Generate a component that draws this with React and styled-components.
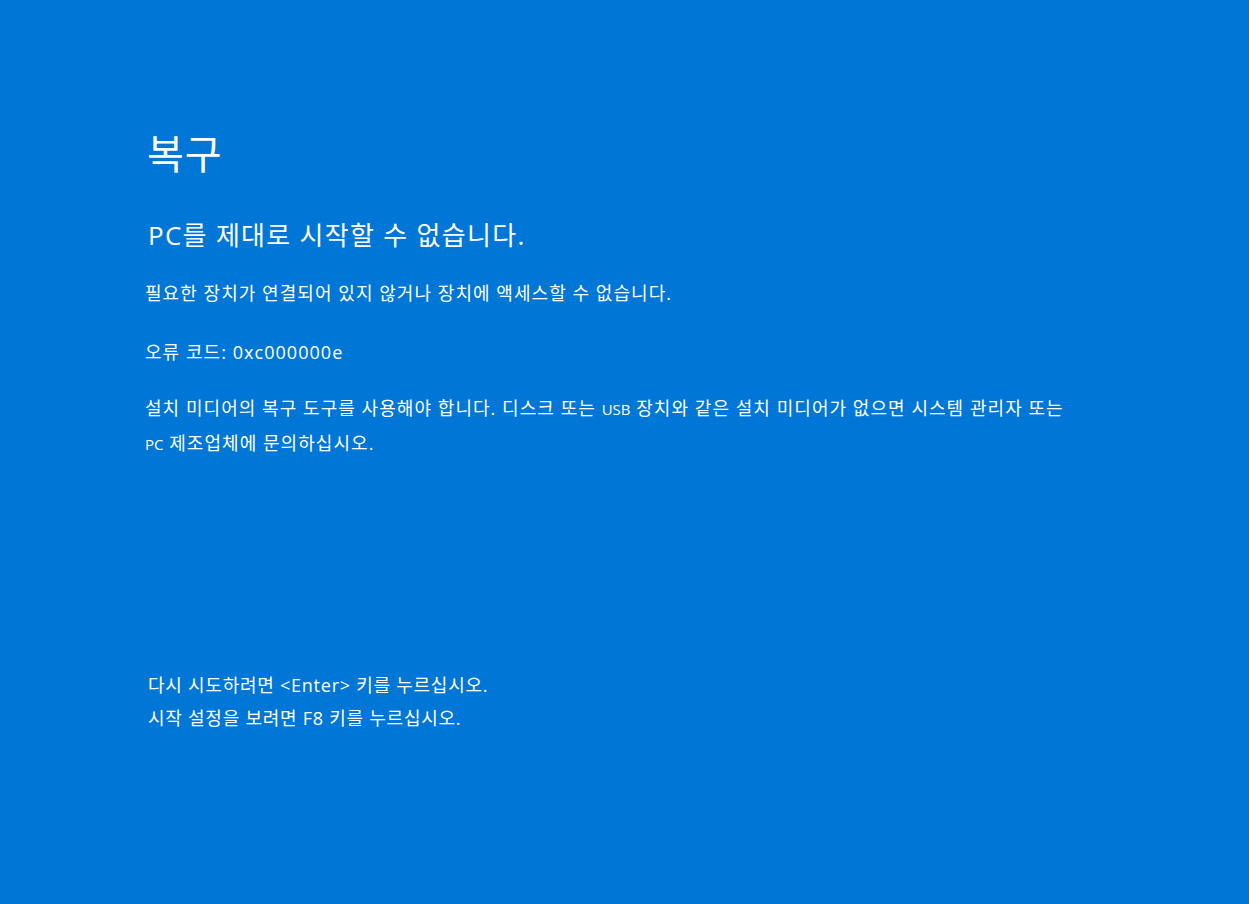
import { styled, createGlobalStyle } from "styled-components"

const Global = createGlobalStyle`
  html, body {
    margin: 0;
    padding: 0;
    background: #0076d7;
  }
`

const Screen = styled.div`
  width: 100vw;
  height: 100vh;
  box-sizing: border-box;
  background: #0076d7;
  color: #ffffff;
  font-family: "Open Sans", "Noto Sans CJK KR", sans-serif;
  padding: 124px 0 0 145px;
  display: flex;
  flex-direction: column;
`

const Title = styled.h1`
  margin: 0;
  font-family: "Noto Sans CJK KR", sans-serif;
  font-weight: 400;
  font-size: 40px;
  line-height: 56px;
  letter-spacing: 1px;
  padding-left: 2px;
`

const Subtitle = styled.h2`
  margin: 37px 0 0;
  font-weight: 400;
  font-size: 26px;
  line-height: 36px;
  letter-spacing: 1.3px;
  padding-left: 3px;
`

const Text = styled.p`
  margin: ${p => p.$top}px 0 0;
  font-size: 18px;
  line-height: 34px;
  letter-spacing: 1.05px;
  max-width: 940px;
`

const Latin = styled.span`
  font-size: 15px;
  letter-spacing: 0;
`

const Footer = styled.div`
  margin-top: 208px;
  padding-left: 3px;
  display: flex;
  flex-direction: column;
`

const FooterLine = styled.span`
  font-size: 18px;
  line-height: 33px;
  letter-spacing: 0.75px;
`

const App = () => {
  return (
    <Screen>
      <Global />
      <Title>복구</Title>
      <Subtitle>PC를 제대로 시작할 수 없습니다.</Subtitle>
      <Text $top={23}>필요한 장치가 연결되어 있지 않거나 장치에 액세스할 수 없습니다.</Text>
      <Text $top={25}>오류 코드: 0xc000000e</Text>
      <Text $top={22}>
        설치 미디어의 복구 도구를 사용해야 합니다. 디스크 또는 <Latin>USB</Latin> 장치와 같은 설치 미디어가 없으면 시스템 관리자 또는 <Latin>PC</Latin> 제조업체에 문의하십시오.
      </Text>
      <Footer>
        <FooterLine>다시 시도하려면 &lt;Enter&gt; 키를 누르십시오.</FooterLine>
        <FooterLine>시작 설정을 보려면 F8 키를 누르십시오.</FooterLine>
      </Footer>
    </Screen>
  )
}

export default App
